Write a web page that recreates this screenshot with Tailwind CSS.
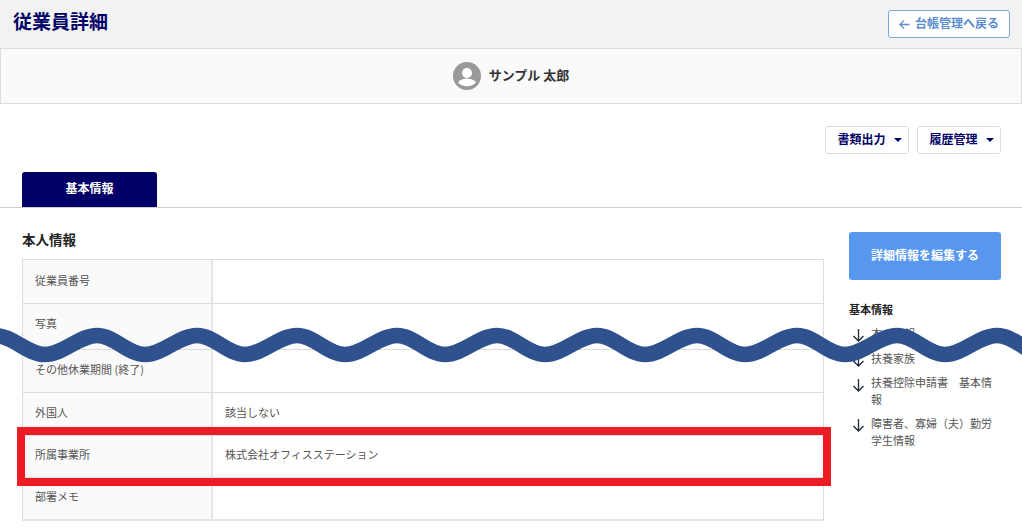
<!doctype html>
<html lang="ja">
<head>
<meta charset="utf-8">
<script src="https://cdn.jsdelivr.net/npm/@tailwindcss/browser@4"></script>
</head>
<body class="bg-white overflow-hidden font-['Noto_Sans_CJK_JP','Noto_Sans',sans-serif]">
<div class="relative w-[1022px] h-[530px] overflow-hidden bg-white">
  <header class="h-[49px] bg-[#f2f2f2] border-b border-[#dcdcdc] flex items-center justify-between pl-[13px] pr-[12px]">
    <h1 class="text-[19px] leading-none font-bold text-[#000066] pb-[7px]">従業員詳細</h1>
    <a class="h-[28px] w-[122px] bg-white border border-[#7ea6e0] rounded-[3px] flex items-center justify-center gap-[5px] text-[12px] font-bold text-[#5b8dd0]">
      <svg class="w-[11px] h-[11px]" viewBox="0 0 12 12" fill="none" stroke="#5b8dd0" stroke-width="1.4"><path d="M11.500 6H1M5.500 1.500 1 6l4.500 4.500"/></svg>
      <span class="pb-[2px]">台帳管理へ戻る</span>
    </a>
  </header>

  <section class="h-[55px] bg-[#fafafa] border border-t-0 border-[#dcdcdc] flex items-center justify-center gap-[8px]">
    <svg class="w-[28px] h-[28px]" viewBox="0 0 28 28"><circle cx="14" cy="14" r="14" fill="#999"/><circle cx="14" cy="11" r="5" fill="#fff"/><path d="M5 20.500c2-3 5.500-4 9-4s7 1 9 4c-2.200 2.400-5.500 3.800-9 3.800s-6.800-1.400-9-3.800z" fill="#fff"/></svg>
    <span class="text-[13px] font-bold text-[#333] pb-[2px]">サンプル 太郎</span>
  </section>

  <div class="h-[68px] flex items-end justify-end gap-[8px] pr-[21px] pb-[18px]">
    <button class="w-[84px] h-[28px] bg-white border border-[#dcdcdc] rounded-[3px] flex items-center justify-center gap-[8px] pl-[6px] pr-[1px] text-[12px] font-bold text-[#000066]">
      <span class="pb-[2px]">書類出力</span><span class="w-0 h-0 mb-[1px] border-x-[4px] border-x-transparent border-t-[4px] border-t-[#000066]"></span>
    </button>
    <button class="w-[84px] h-[28px] bg-white border border-[#dcdcdc] rounded-[3px] flex items-center justify-center gap-[8px] pl-[6px] pr-[1px] text-[12px] font-bold text-[#000066]">
      <span class="pb-[2px]">履歴管理</span><span class="w-0 h-0 mb-[1px] border-x-[4px] border-x-transparent border-t-[4px] border-t-[#000066]"></span>
    </button>
  </div>

  <nav class="h-[36px] border-b border-[#cfcfcf] pl-[22px]">
    <div class="w-[135px] h-[35px] bg-[#000066] rounded-t-[3px] flex items-center justify-center pb-[3px] text-[12px] font-bold text-white">基本情報</div>
  </nav>

  <main class="flex gap-[25px] pl-[22px] pr-[21px]">
    <div class="w-[802px]">
      <h2 class="h-[51px] flex items-center pt-[12px] text-[13.5px] font-bold text-[#222]">本人情報</h2>
      <div class="border-x border-t border-[#dcdcdc] text-[11px] text-[#555]">
        <div class="flex h-[44px] border-b border-[#dcdcdc]"><div class="w-[190px] shrink-0 bg-[#fafafa] border-r-2 border-[#e6e6e6] flex items-center pl-[12px] pb-[3px]">従業員番号</div><div class="flex-1"></div></div>
        <div class="flex h-[46px] border-b border-[#dcdcdc]"><div class="w-[190px] shrink-0 bg-[#fafafa] border-r-2 border-[#e6e6e6] pl-[12px] pt-[11px]">写真</div><div class="flex-1"></div></div>
        <div class="flex h-[43px] border-b border-[#dcdcdc]"><div class="w-[190px] shrink-0 bg-[#fafafa] border-r-2 border-[#e6e6e6] flex items-center pl-[12px] pb-[3px]">その他休業期間 (終了)</div><div class="flex-1"></div></div>
        <div class="flex h-[43px] border-b border-[#dcdcdc]"><div class="w-[190px] shrink-0 bg-[#fafafa] border-r-2 border-[#e6e6e6] flex items-center pl-[12px] pb-[3px]">外国人</div><div class="flex-1 flex items-center pl-[12px] pb-[3px]">該当しない</div></div>
        <div class="flex h-[42px] border-b border-[#dcdcdc]"><div class="w-[190px] shrink-0 bg-[#fafafa] border-r-2 border-[#e6e6e6] flex items-center pl-[12px] pb-[4px]">所属事業所</div><div class="flex-1 flex items-center pl-[12px] pb-[4px]">株式会社オフィスステーション</div></div>
        <div class="flex h-[43px] border-b-2 border-[#e6e6e6]"><div class="w-[190px] shrink-0 bg-[#fafafa] border-r-2 border-[#e6e6e6] flex items-center pl-[12px] pb-[4px]">部署メモ</div><div class="flex-1"></div></div>
      </div>
    </div>

    <aside class="w-[152px] pt-[24px]">
      <button class="w-full h-[48px] bg-[#5897ef] rounded-[3px] pb-[3px] text-[12px] font-bold text-white">詳細情報を編集する</button>
      <h3 class="mt-[20px] h-[18px] flex items-center text-[11px] font-bold text-[#222]">基本情報</h3>
      <ul class="mt-[7px] text-[11px] leading-[17px] text-[#555]">
        <li class="flex gap-[6px] pl-[3px] h-[25px]"><svg class="w-[13px] h-[14px] mt-[3px] shrink-0" viewBox="0 0 13 14" fill="none" stroke="#1f2a3a" stroke-width="1.3"><path d="M6.500 1v12M1.500 8l5 5 5-5"/></svg><span>本人情報</span></li>
        <li class="flex gap-[6px] pl-[3px] h-[25px]"><svg class="w-[13px] h-[14px] mt-[3px] shrink-0" viewBox="0 0 13 14" fill="none" stroke="#1f2a3a" stroke-width="1.3"><path d="M6.500 1v12M1.500 8l5 5 5-5"/></svg><span>扶養家族</span></li>
        <li class="flex gap-[6px] pl-[3px] h-[40px]"><svg class="w-[13px] h-[14px] mt-[3px] shrink-0" viewBox="0 0 13 14" fill="none" stroke="#1f2a3a" stroke-width="1.3"><path d="M6.500 1v12M1.500 8l5 5 5-5"/></svg><span class="-mt-px">扶養控除申請書　基本情報</span></li>
        <li class="flex gap-[6px] pl-[3px]"><svg class="w-[13px] h-[14px] mt-[3px] shrink-0" viewBox="0 0 13 14" fill="none" stroke="#1f2a3a" stroke-width="1.3"><path d="M6.500 1v12M1.500 8l5 5 5-5"/></svg><span>障害者、寡婦（夫）勤労学生情報</span></li>
      </ul>
    </aside>
  </main>

  <div class="absolute left-[17px] top-[427px] w-[814px] h-[59px] border-[8px] border-[#ed1c24]"></div>

  <svg class="absolute left-0 top-0 pointer-events-none" width="1022" height="530" viewBox="0 0 1022 530" fill="none">
    <path d="M-55 354.500C-37 354.500-23 335.500-5 335.500S27 354.500 45 354.500 79 335.500 97 335.500 127 354.500 145 354.500 179 335.500 197 335.500 227 354.500 245 354.500 279 335.500 297 335.500 327 354.500 345 354.500 379 335.500 397 335.500 427 354.500 445 354.500 479 335.500 497 335.500 527 354.500 545 354.500 579 335.500 597 335.500 627 354.500 645 354.500 679 335.500 697 335.500 727 354.500 745 354.500 779 335.500 797 335.500 827 354.500 845 354.500 879 335.500 897 335.500 927 354.500 945 354.500 979 335.500 997 335.500 1027 354.500 1045 354.500" stroke="#2f528f" stroke-width="15.500"/>
  </svg>
</div>
</body>
</html>
